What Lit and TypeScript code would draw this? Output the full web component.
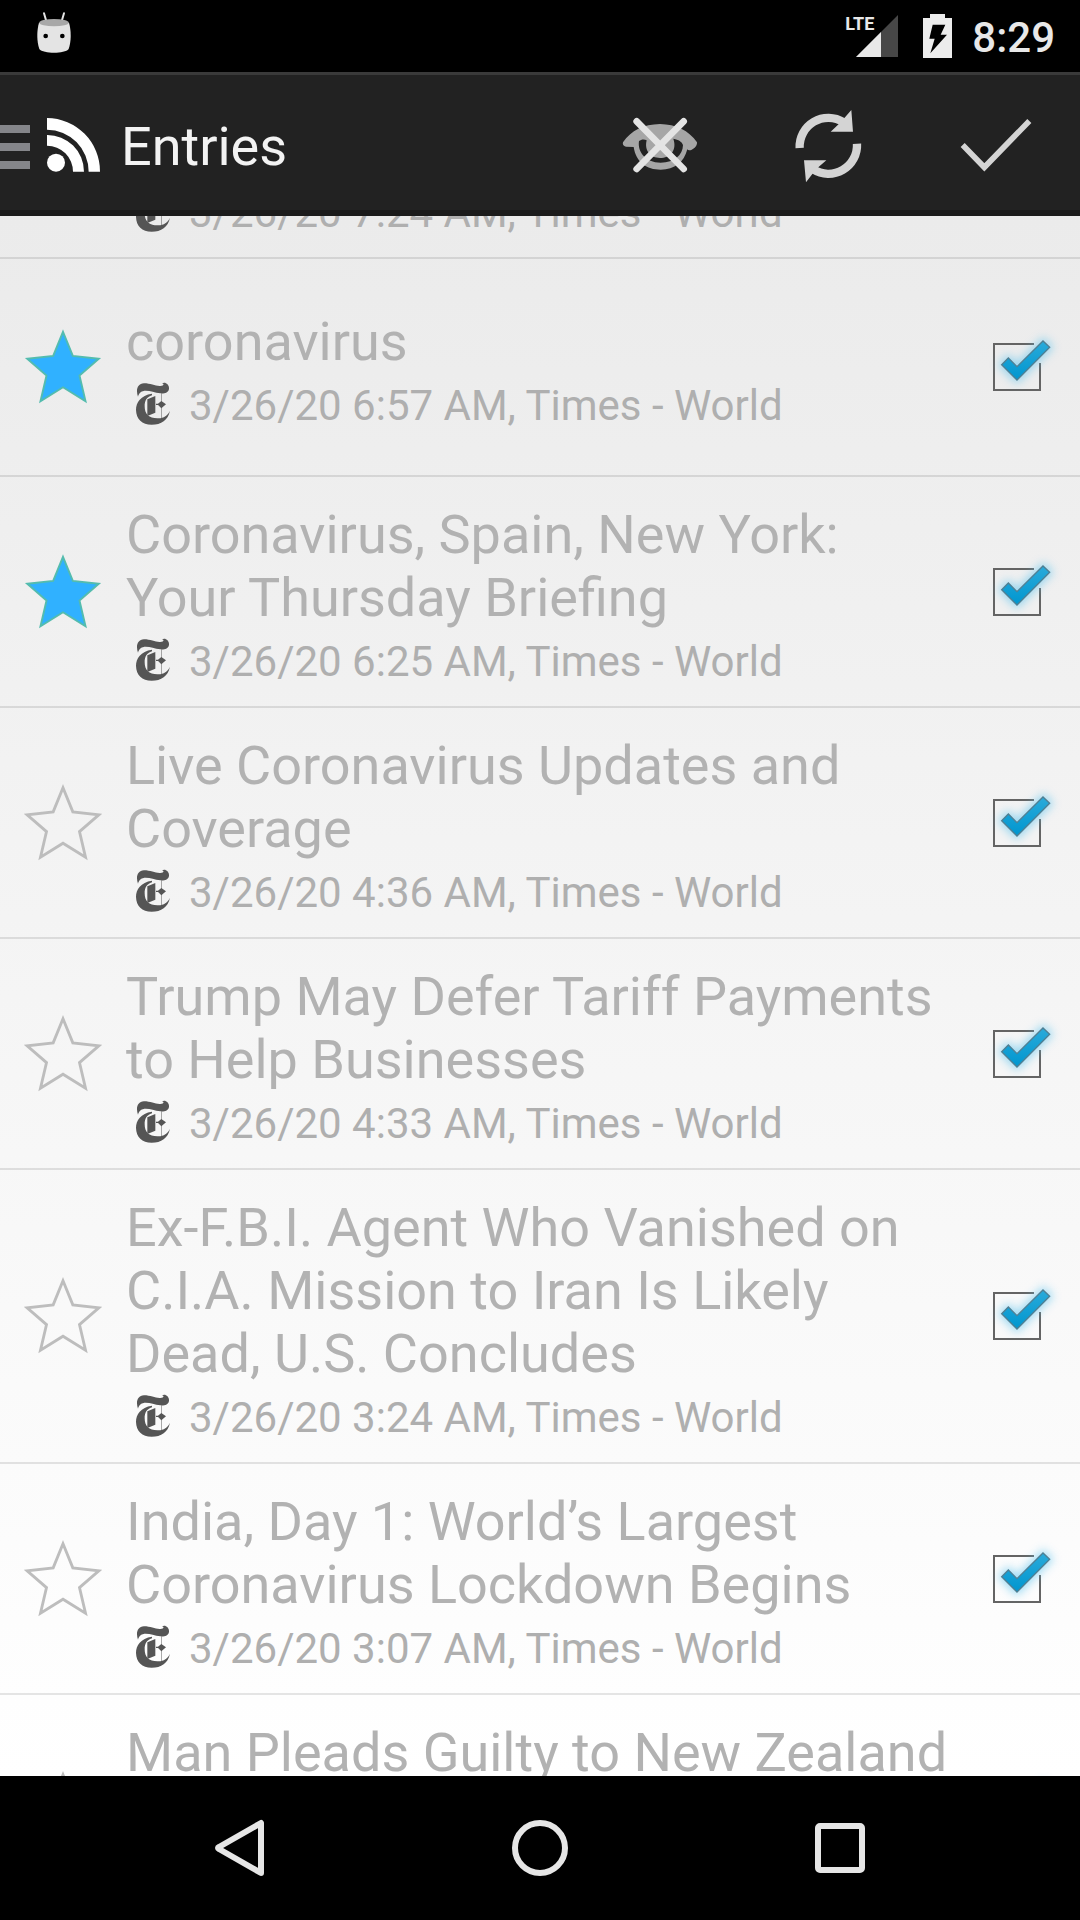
import { LitElement, html, css, svg } from "lit";
import { customElement, property, state } from "lit/decorators.js";
import { classMap } from "lit/directives/class-map.js";

interface Entry {
  title: string;
  time: string;
  starred: boolean;
  read: boolean;
  clip?: "top" | "bottom";
}

const STAR = "189,92 220,168 302,177 241,230 260,311 189,267 118,311 137,230 76,177 158,168";

@customElement("feed-entry")
export class FeedEntry extends LitElement {
  @property({ attribute: false }) entry!: Entry;

  static styles = css`
    :host {
      display: block;
      border-bottom: 2px solid rgba(0, 0, 0, 0.1);
    }
    .row {
      display: grid;
      grid-template-columns: 126px minmax(0, 1fr) 120px;
      align-items: center;
      min-height: 216px;
    }
    .row.clip-top {
      min-height: 0;
      grid-template-rows: 41px;
      align-items: end;
      overflow: hidden;
    }
    .text {
      padding: 26px 12px 17px 0;
    }
    .title {
      margin: 0;
      font-size: 54px;
      line-height: 63px;
      font-weight: 400;
      color: #b2b2b2;
    }
    .clip-bottom .title {
      min-height: 126px;
    }
    .meta {
      display: flex;
      align-items: center;
      height: 60px;
      gap: 18px;
      padding-left: 9px;
      font-size: 42px;
      line-height: 49px;
      color: #afafaf;
    }
    .date {
      padding-top: 5px;
      white-space: nowrap;
    }
    .feed-icon {
      flex: none;
      width: 36px;
      height: 44px;
      padding-top: 2px;
    }
    .star {
      display: grid;
      place-items: center;
      height: 96px;
      margin: 0;
      padding: 0;
      border: 0;
      background: none;
    }
    .star svg {
      width: 78px;
      height: 78px;
    }
    .tick {
      display: grid;
      place-items: center;
      height: 114px;
    }
    .tick > * {
      grid-area: 1 / 1;
      width: 120px;
      height: 110px;
      margin: 0;
    }
    .tick input {
      appearance: none;
    }
    .tick svg {
      pointer-events: none;
      overflow: visible;
    }
  `;

  private toggle(key: "starred" | "read") {
    this.entry = { ...this.entry, [key]: !this.entry[key] };
  }

  private renderStar() {
    const on = this.entry.starred;
    return html`<button class="star" aria-pressed=${on} aria-label="Star" @click=${() => this.toggle("starred")}>
      <svg viewBox="66 80 246 246">
        ${on
          ? svg`<polygon points=${STAR} fill="#30b1ff" stroke="#54bcae" stroke-width="6" />`
          : svg`<polygon points=${STAR} fill="none" stroke="#bdbdbd" stroke-width="9" />`}
      </svg>
    </button>`;
  }

  private renderTick() {
    return html`<label class="tick">
      <input type="checkbox" aria-label="Read" .checked=${this.entry.read} @change=${() => this.toggle("read")} />
      <svg viewBox="0 6 360 330">
        <defs>
          <filter id="glow" x="-50%" y="-50%" width="200%" height="200%">
            <feGaussianBlur stdDeviation="15" />
          </filter>
          <linearGradient id="ink" x1="0" y1="0" x2="0" y2="1">
            <stop offset="0" stop-color="#2aaada" />
            <stop offset="1" stop-color="#0096cf" />
          </linearGradient>
        </defs>
        <path
          d=${this.entry.read ? "M222 102H102V240H240V159" : "M102 102H240V240H102Z"}
          fill="none"
          stroke="#646464"
          stroke-width="6"
        />
        ${this.entry.read
          ? svg`
              <polygon points="123,164 145,142 171,168 250,91 271,112 171,212" fill="#5fc4ee" stroke="#5fc4ee" stroke-width="14" opacity=".6" filter="url(#glow)" />
              <polygon points="125,164 145,144 171,170 249,93 269,112 171,210" fill="url(#ink)" stroke="#4f7f93" stroke-width="4" />`
          : ""}
      </svg>
    </label>`;
  }

  render() {
    const e = this.entry;
    const top = e.clip === "top";
    return html`<article class=${classMap({ row: true, "clip-top": top, "clip-bottom": e.clip === "bottom" })}>
      ${top ? html`<span></span>` : this.renderStar()}
      <div class="text">
        ${e.title ? html`<h2 class="title">${e.title}</h2>` : ""}
        <div class="meta">
          <svg class="feed-icon" viewBox="45 34 108 132" fill="#555">
            <path
              d="M54 78C47 58 52 39 72 38C92 38 106 47 121 46C132 45 133 40 126 38C136 32 148 42 147 54C146 66 133 69 121 68C104 66 92 60 77 60C65 60 57 66 54 78Z"
            />
            <path
              d="M96 69C62 74 48 95 48 118C49 146 66 162 95 162C124 162 144 148 150 120C143 135 132 142 115 143C88 144 74 131 74 107C74 90 80 80 96 74Z"
            />
            <path d="M82 86L106 76V126L82 136Z" />
            <path d="M123 68H126V144H123Z" opacity=".5" />
            <path d="M112 101L124 91L138 101L124 113ZM108 99H116V103H108Z" />
          </svg>
          <span class="date">${e.time}</span>
        </div>
      </div>
      ${top ? "" : this.renderTick()}
    </article>`;
  }
}

@customElement("app-root")
export class AppRoot extends LitElement {
  @state() private entries: Entry[] = [
    { title: "", time: "3/26/20 7:24 AM, Times - World", starred: false, read: true, clip: "top" },
    { title: "coronavirus", time: "3/26/20 6:57 AM, Times - World", starred: true, read: true },
    {
      title: "Coronavirus, Spain, New York: Your Thursday Briefing",
      time: "3/26/20 6:25 AM, Times - World",
      starred: true,
      read: true,
    },
    {
      title: "Live Coronavirus Updates and Coverage",
      time: "3/26/20 4:36 AM, Times - World",
      starred: false,
      read: true,
    },
    {
      title: "Trump May Defer Tariff Payments to Help Businesses",
      time: "3/26/20 4:33 AM, Times - World",
      starred: false,
      read: true,
    },
    {
      title: "Ex-F.B.I. Agent Who Vanished on C.I.A. Mission to Iran Is Likely Dead, U.S. Concludes",
      time: "3/26/20 3:24 AM, Times - World",
      starred: false,
      read: true,
    },
    {
      title: "India, Day 1: World’s Largest Coronavirus Lockdown Begins",
      time: "3/26/20 3:07 AM, Times - World",
      starred: false,
      read: true,
    },
    { title: "Man Pleads Guilty to New Zealand", time: "", starred: false, read: true, clip: "bottom" },
  ];

  static styles = css`
    :host {
      display: flex;
      flex-direction: column;
      height: 100vh;
      overflow: hidden;
      background: #000;
      font-family: Roboto, sans-serif;
    }
    button {
      display: grid;
      place-items: center;
      margin: 0;
      padding: 0;
      border: 0;
      background: none;
    }
    .status {
      flex: none;
      display: flex;
      align-items: center;
      height: 72px;
      padding: 0 25px 0 33px;
      color: #e8e8e8;
    }
    .droid {
      width: 42px;
      height: 48px;
      margin-right: auto;
    }
    .lte {
      align-self: flex-start;
      padding-top: 14px;
      font-size: 18px;
      line-height: 20px;
      font-weight: 700;
    }
    .signal {
      width: 42px;
      height: 42px;
      margin-left: -18px;
    }
    .battery {
      width: 29px;
      height: 44px;
      margin: 0 20px 0 25px;
    }
    .clock {
      font-size: 42px;
      line-height: 48px;
      font-weight: 500;
      padding-top: 4px;
    }
    .bar {
      flex: none;
      box-sizing: border-box;
      display: flex;
      align-items: center;
      height: 144px;
      padding-top: 2px;
      border-top: 3px solid #3a3a3a;
      border-bottom: 6px solid #1b1b1b;
      background: #222;
      color: #f3f3f3;
    }
    .home {
      display: flex;
      align-items: center;
      gap: 17px;
      padding-top: 2px;
      color: inherit;
    }
    .menu {
      width: 30px;
      height: 44px;
      margin-top: 4px;
    }
    .rss {
      width: 54px;
      height: 54px;
    }
    .heading {
      margin: 0 auto 0 20px;
      font-size: 54px;
      line-height: 64px;
      font-weight: 400;
      padding-top: 6px;
    }
    .action svg {
      width: 168px;
      height: 133px;
    }
    .list {
      flex: 1;
      min-height: 0;
      overflow: hidden;
      background: linear-gradient(#ebebeb, #fff);
    }
    .nav {
      flex: none;
      display: flex;
      justify-content: center;
      height: 144px;
    }
    .nav button {
      flex: 0 1 300px;
    }
    .nav svg {
      width: 60px;
      height: 60px;
    }
  `;

  render() {
    return html`
      <header class="status">
        <svg class="droid" viewBox="99 36 126 144">
          <path d="M132 40L139 64M192 40L185 64" stroke="#e4e4e4" stroke-width="6" stroke-linecap="round" />
          <path d="M117 68C110 92 110 124 118 147C130 162 194 162 206 147C214 124 214 92 207 68Z" fill="#e4e4e4" />
          <ellipse cx="162" cy="68" rx="44" ry="11" fill="#a8a8a8" />
          <circle cx="137" cy="108" r="7" />
          <circle cx="187" cy="108" r="7" />
        </svg>
        <span class="lte">LTE</span>
        <svg class="signal" viewBox="168 45 126 126">
          <path d="M294 45V171H168Z" fill="#474747" />
          <path d="M243 96V171H168Z" fill="#e8e8e8" />
        </svg>
        <svg class="battery" viewBox="369 42 87 132">
          <path d="M390 42H435V54H456V174H369V54H390Z" fill="#ececec" />
          <path d="M398 74H436L422 104H441L391 160L404 116H388Z" fill="#000" />
        </svg>
        <time class="clock">8:29</time>
      </header>
      <div class="bar">
        <button class="home" aria-label="Menu">
          <svg class="menu" viewBox="0 0 30 44" fill="#85868a">
            <path d="M0 0H30V8H0ZM0 18H30V26H0ZM0 36H30V44H0Z" />
          </svg>
          <svg class="rss" viewBox="141 352 162 162" fill="#fff">
            <circle cx="168" cy="486" r="27" />
            <path d="M141 403A110 110 0 0 1 252 513H219A78 78 0 0 0 141 435Z" />
            <path d="M141 352A160 160 0 0 1 300 513H266A126 126 0 0 0 141 387Z" />
          </svg>
        </button>
        <h1 class="heading">Entries</h1>
        <button class="action" aria-label="Hide read">
          <svg viewBox="48 48 504 399">
            <path
              d="M189 244C214 208 250 190 300 189C348 190 386 208 411 244C412 254 404 262 394 267C388 269 384 268 382 265C372 304 344 326 302 326C260 326 228 304 221 258L198 257C190 256 187 250 189 244ZM237 240C232 272 256 305 302 305C344 305 368 282 369 252C366 242 356 236 340 233C352 268 330 291 300 291C272 291 252 270 260 238C254 234 244 234 237 240Z"
              fill="#a6a6a6"
              fill-rule="evenodd"
            />
            <path d="M230 181L371 324M371 181L230 324" stroke="#e4e4e4" stroke-width="20" stroke-linecap="round" />
          </svg>
        </button>
        <button class="action" aria-label="Refresh">
          <svg viewBox="552 48 504 399">
            <g fill="none" stroke="#d4d4d4" stroke-width="25">
              <path d="M719 261A86 86 0 0 1 851 184" />
              <path d="M891 248A86 86 0 0 1 759 325" />
            </g>
            <path d="M874 147L879 212H812L842 184ZM738 364L732 298H799L768 325Z" fill="#d4d4d4" />
          </svg>
        </button>
        <button class="action" aria-label="Mark all as read">
          <svg viewBox="1056 48 504 399">
            <path d="M1208 252L1273 319L1408 180" fill="none" stroke="#d4d4d4" stroke-width="17" />
          </svg>
        </button>
      </div>
      <main class="list">${this.entries.map((entry) => html`<feed-entry .entry=${entry}></feed-entry>`)}</main>
      <nav class="nav">
        <button aria-label="Back">
          <svg viewBox="0 0 60 60"><path d="M51 5V55L9 31Q7 30 9 29Z" fill="none" stroke="#e6e6e6" stroke-width="6" stroke-linejoin="round" /></svg>
        </button>
        <button aria-label="Home">
          <svg viewBox="0 0 60 60"><circle cx="30" cy="30" r="25" fill="none" stroke="#e6e6e6" stroke-width="6" /></svg>
        </button>
        <button aria-label="Recent apps">
          <svg viewBox="0 0 60 60"><rect x="8" y="8" width="44" height="44" rx="2" fill="none" stroke="#e6e6e6" stroke-width="6" /></svg>
        </button>
      </nav>
    `;
  }
}
